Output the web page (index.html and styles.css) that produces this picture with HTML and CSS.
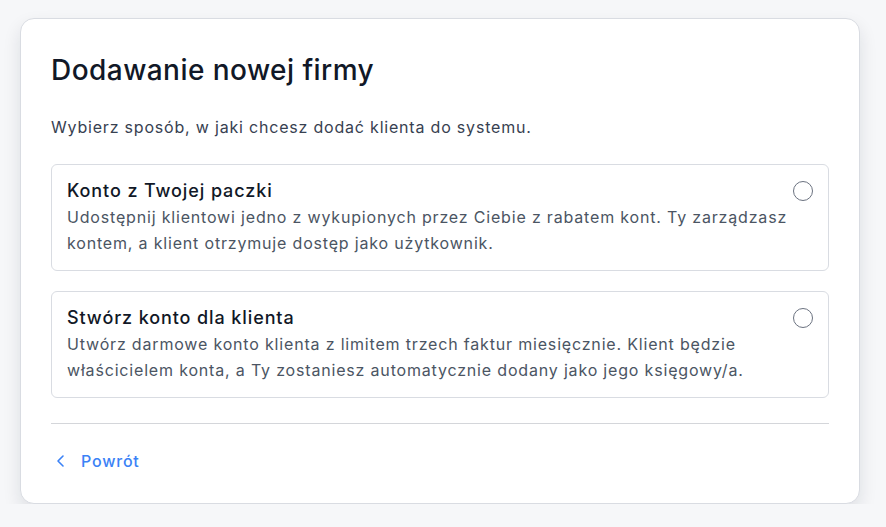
FILE: index.html
```html
<!DOCTYPE html>
<html lang="pl">
<head>
<meta charset="utf-8">
<link rel="stylesheet" href="styles.css">
</head>
<body>
<div class="card">
  <h1 class="title">Dodawanie nowej firmy</h1>
  <p class="lead">Wybierz sposób, w jaki chcesz dodać klienta do systemu.</p>
  <div class="options">
    <label class="option">
      <div class="option-text">
        <div class="option-title">Konto z Twojej paczki</div>
        <div class="option-desc">Udostępnij klientowi jedno z wykupionych przez Ciebie z rabatem kont. Ty zarządzasz kontem, a klient otrzymuje dostęp jako użytkownik.</div>
      </div>
      <span class="radio"></span>
    </label>
    <label class="option">
      <div class="option-text">
        <div class="option-title">Stwórz konto dla klienta</div>
        <div class="option-desc">Utwórz darmowe konto klienta z limitem trzech faktur miesięcznie. Klient będzie właścicielem konta, a Ty zostaniesz automatycznie dodany jako jego księgowy/a.</div>
      </div>
      <span class="radio"></span>
    </label>
  </div>
  <div class="footer">
    <a class="back" href="#">
      <svg class="chev" width="16" height="16" viewBox="0 0 16 16" fill="none" stroke="currentColor" stroke-width="1.6" stroke-linecap="round" stroke-linejoin="round"><path d="M10 3 L5 8 L10 13"/></svg>
      <span>Powrót</span>
    </a>
  </div>
</div>
</body>
</html>
```
FILE: styles.css
```css
html, body {
  margin: 0;
  padding: 0;
}
body {
  background: #f6f7f9;
  font-family: Inter, "Open Sans", sans-serif;
  color: #1f2937;
  padding: 18px 26px 0 20px;
}
.card {
  box-sizing: border-box;
  width: 840px;
  height: 486px;
  background: #fff;
  border: 1px solid #d9dce2;
  border-radius: 14px;
  box-shadow: 0 8px 18px rgba(15, 23, 42, 0.11);
  padding: 32px 30px 0 30px;
}
.title {
  margin: 0;
  font-size: 28px;
  font-weight: 500;
  line-height: 38px;
  color: #111827;
  letter-spacing: 0.45px;
}
.lead {
  margin: 26px 0 0 0;
  font-size: 16px;
  line-height: 24px;
  color: #374151;
  letter-spacing: 0.8px;
}
.options {
  margin-top: 25px;
  display: flex;
  flex-direction: column;
  gap: 20px;
}
.option {
  box-sizing: border-box;
  height: 107px;
  display: flex;
  justify-content: space-between;
  align-items: flex-start;
  border: 1px solid #d9dce2;
  border-radius: 6px;
  padding: 13px 15px 0 15px;
}
.option-text {
  flex: 1;
  min-width: 0;
}
.option-title {
  font-size: 18px;
  line-height: 26px;
  font-weight: 500;
  color: #111827;
  letter-spacing: 0.9px;
}
.option-desc {
  font-size: 16px;
  line-height: 26px;
  color: #4b5563;
  letter-spacing: 0.82px;
}
.radio {
  flex: none;
  box-sizing: border-box;
  width: 20px;
  height: 20px;
  border: 1.5px solid #6b7280;
  border-radius: 50%;
  margin-top: 3px;
  margin-left: 4px;
}
.footer {
  margin-top: 25px;
  border-top: 1px solid #d4d6da;
  padding-top: 25px;
}
.back {
  display: inline-flex;
  align-items: center;
  gap: 12px;
  color: #3b82f6;
  text-decoration: none;
  font-size: 16px;
  line-height: 24px;
  font-weight: 500;
  padding-left: 2px;
  letter-spacing: 0.8px;
}
.chev {
  display: block;
}
```
